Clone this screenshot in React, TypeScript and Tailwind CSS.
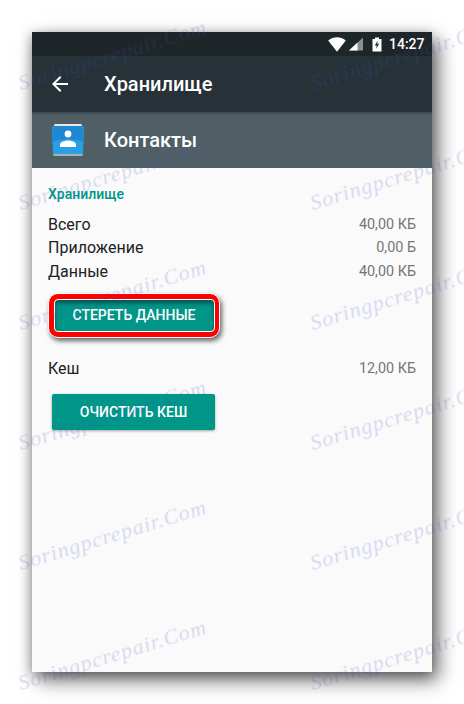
const marks = [
  "left-[23px] top-[68px]",
  "left-[23px] top-[188px]",
  "left-[23px] top-[308px]",
  "left-[23px] top-[428px]",
  "left-[23px] top-[548px]",
  "left-[23px] top-[668px]",
  "left-[315px] top-[68px]",
  "left-[315px] top-[188px]",
  "left-[315px] top-[308px]",
  "left-[315px] top-[428px]",
  "left-[315px] top-[548px]",
  "left-[315px] top-[668px]",
];

function StatusIcons() {
  return (
    <div className="flex items-center justify-end h-6 pr-2 gap-0 text-white">
      <svg width="18" height="15" viewBox="0 0 18 15" className="mr-[1px]">
        <path d="M0.2 3.5C3 1.2 5.8 0.2 9 0.2s6 1 8.8 3.3L9 14.8z" fill="#fff" />
      </svg>
      <svg width="16" height="14" viewBox="0 0 16 14" className="ml-[1px]">
        <path d="M15 0.5V13.5H1z" fill="#8a8f92" />
        <path d="M9.5 5.6V13.5H1z" fill="#fff" />
      </svg>
      <svg width="10" height="15" viewBox="0 0 10 15" className="ml-2">
        <path d="M3 0.5h4V2h2.5v12.5H0.5V2H3z" fill="#fff" />
        <path d="M5.6 3.6L2.8 8.6h1.8l-.4 3.4 2.9-5.2H5.2z" fill="#263238" />
      </svg>
      <span className="ml-[7px] text-[14px] font-medium leading-6 w-[35px]">14:27</span>
    </div>
  );
}

function ContactsIcon() {
  return (
    <svg width="32" height="32" viewBox="0 0 32 32">
      <path d="M2 1.5C2 .7 2.7 0 3.5 0h25c.8 0 1.5.7 1.5 1.5V3H2z" fill="#e3e8ea" />
      <path d="M1 30v-1h30v1c0 1-.8 2-2 2H3c-1.2 0-2-1-2-2z" fill="#a9b2b6" />
      <path d="M1 2h30l1 1-1 27H1L0 3z" fill="#2a9fe6" />
      <path d="M1 2h30l.6 1-.6 14-15-2-15 2-.6-14z" fill="#1e88d5" />
      <circle cx="16" cy="10" r="3.4" fill="#fff" />
      <path d="M8 23v-2.4c0-2.6 5.2-4 8-4s8 1.4 8 4V23z" fill="#fff" />
    </svg>
  );
}

function Row({ label, value }: { label: string; value: string }) {
  return (
    <div className="flex items-center justify-between h-[23.5px]">
      <span className="text-[16px] text-[#212121]">{label}</span>
      <span className="text-[14.4px] text-[#757575]">{value}</span>
    </div>
  );
}

export default function App() {
  return (
    <div
      className="relative w-[464px] h-[704px] overflow-hidden bg-white pt-8 px-8"
      style={{ fontFamily: "Roboto, 'Noto Sans', sans-serif" }}
    >
      <div className="h-[640px] flex flex-col bg-[#fafafa] shadow-[6px_8px_18px_rgba(0,0,0,0.6),-2px_2px_10px_rgba(0,0,0,0.25)]">
        <div className="bg-[#1f2629]">
          <StatusIcons />
        </div>
        <div className="h-14 flex items-center bg-[#263238] pl-4">
          <svg width="24" height="24" viewBox="0 0 24 24" fill="#fff">
            <path d="M20 11H7.83l5.59-5.59L12 4l-8 8 8 8 1.41-1.41L7.83 13H20v-2z" />
          </svg>
          <span className="ml-8 text-[20px] font-medium text-white">Хранилище</span>
        </div>
        <div className="h-14 flex items-center bg-[#505f66] pl-5 shadow-[inset_0_3px_3px_-2px_rgba(0,0,0,0.3)]">
          <ContactsIcon />
          <span className="ml-5 text-[20px] font-medium text-white">Контакты</span>
        </div>
        <div className="flex-1 px-4">
          <div className="mt-4 h-5 leading-5 text-[14px] font-medium text-[#009688]">Хранилище</div>
          <div className="mt-[9px]">
            <Row label="Всего" value="40,00 КБ" />
            <Row label="Приложение" value="0,00 Б" />
            <Row label="Данные" value="40,00 КБ" />
          </div>
          <div className="mt-[9.5px] w-[172px] h-[45px] flex items-center justify-center rounded-[10px] bg-[#ff0000] border border-white shadow-[2px_3px_5px_rgba(0,0,0,0.6)]">
            <div className="w-[161px] h-[33px] flex items-center justify-center rounded-[4px] bg-[#009688] border border-white shadow-[inset_0_3px_4px_rgba(0,0,0,0.45)] text-[14px] font-medium text-white">
              СТЕРЕТЬ ДАННЫЕ
            </div>
          </div>
          <div className="mt-[19.5px]">
            <Row label="Кеш" value="12,00 КБ" />
          </div>
          <div className="mt-[13px] ml-1 w-[163px] h-9 flex items-center justify-center rounded-[2px] bg-[#009688] shadow-[0_1px_3px_rgba(0,0,0,0.35)] text-[14px] font-medium text-white">
            ОЧИСТИТЬ КЕШ
          </div>
        </div>
      </div>
      {marks.map((m) => (
        <span
          key={m}
          className={`absolute ${m} h-[30px] leading-[30px] whitespace-nowrap origin-bottom-left rotate-[-17deg] italic text-[22px] tracking-[1px] text-[#3c50be]/[0.2] blur-[0.4px] pointer-events-none`}
          style={{ fontFamily: "'Liberation Serif', serif" }}
        >
          Soringpcrepair.Com
        </span>
      ))}
    </div>
  );
}
